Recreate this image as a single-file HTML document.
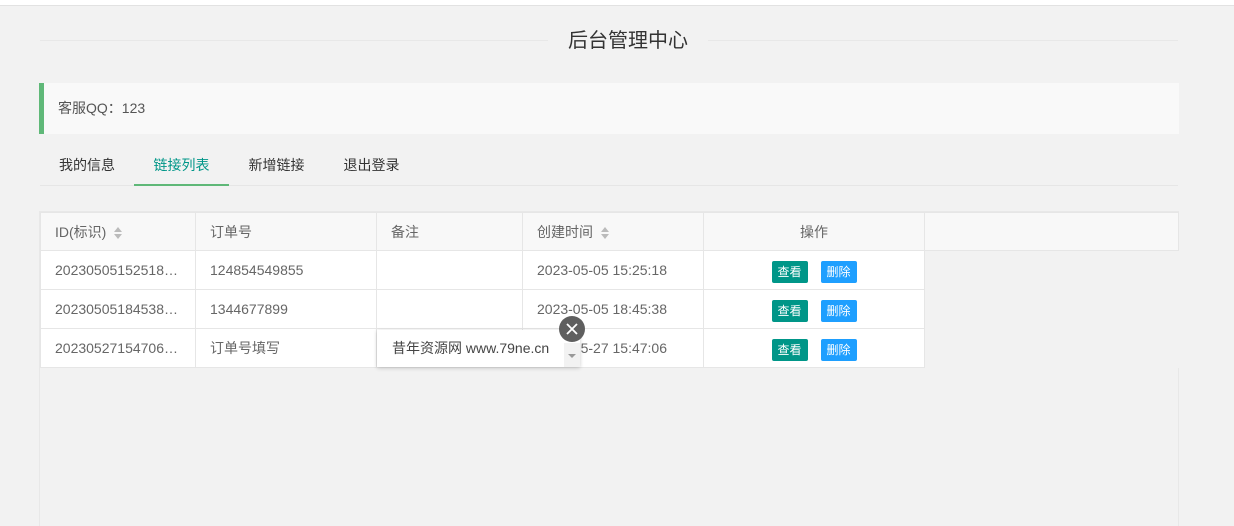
<!DOCTYPE html>
<html><head><meta charset="utf-8"><style>
*{margin:0;padding:0;box-sizing:border-box}
html{width:1234px;height:526px;overflow:hidden}
body{width:1234px;height:526px;background:#f2f2f2;font-family:"Liberation Sans","Noto Sans CJK SC",sans-serif;font-size:14px;color:#666;position:relative;overflow:hidden}
.top{position:absolute;left:0;top:0;width:1234px;height:6px;background:#fff;border-bottom:1px solid #e2e2e2}
.hr{position:absolute;left:40px;top:40px;width:1138px;height:1px;background:#e8e8e8}
.title{position:absolute;left:548px;top:28px;width:160px;text-align:center;background:#f2f2f2;font-size:20px;color:#333;line-height:26px}
.quote{position:absolute;left:39px;top:83px;width:1140px;height:51px;background:#f9f9f9;border-left:5px solid #5fb878;padding-left:14px;line-height:51px;color:#555}
.tabs{position:absolute;left:40px;top:145px;width:1138px;height:41px;border-bottom:1px solid #e6e6e6}
.tab{position:absolute;top:0;height:41px;line-height:40px;color:#333;text-align:center}
.tab.on{color:#009688;border-bottom:2px solid #5fb878}
.wrap{position:absolute;left:39px;top:211px;width:1140px;height:315px;border:1px solid #e8e8e8;border-bottom:none}
table{position:absolute;left:40px;top:212px;border-collapse:collapse}
td,th{height:39px;border:1px solid #e6e6e6;font-weight:normal;text-align:left;padding-left:14px;color:#666;white-space:nowrap;overflow:hidden}
th{background:#f8f8f8;height:38px}
tr.b td{background:#fff}
.s{display:inline-block;vertical-align:middle;margin-left:8px;width:8px;height:12px;position:relative}
.s:before{content:"";position:absolute;left:0;top:0;border:4px solid transparent;border-bottom:5px solid #bbb;border-top:0}
.s:after{content:"";position:absolute;left:0;top:7px;border:4px solid transparent;border-top:5px solid #bbb;border-bottom:0}
.btn{display:inline-block;width:36px;height:22px;line-height:22px;color:#fff;font-size:12px;text-align:center;border-radius:2px;vertical-align:middle;position:relative;top:2px}
.g{background:#009688}.bl{background:#1e9fff;margin-left:13px}
.pop{position:absolute;left:377px;top:330px;width:203px;height:37px;background:#fff;box-shadow:0 1px 4px rgba(0,0,0,.2);line-height:37px;padding-left:15px;color:#444}
.pop .ar{position:absolute;right:0;top:13px;width:16px;height:24px;background:#f2f2f2}
.pop .ar:after{content:"";position:absolute;left:4px;top:11px;border:4px solid transparent;border-top:4px solid #999}
.x{position:absolute;left:559px;top:316px;width:26px;height:26px;border-radius:50%;background:#5f5f5f}
</style></head><body>
<div class="top"></div>
<div class="hr"></div>
<div class="title">后台管理中心</div>
<div class="quote">客服QQ：123</div>
<div class="tabs">
<div class="tab" style="left:0;width:94px">我的信息</div>
<div class="tab on" style="left:94px;width:95px">链接列表</div>
<div class="tab" style="left:189px;width:95px">新增链接</div>
<div class="tab" style="left:284px;width:95px">退出登录</div>
</div>
<div class="wrap"></div>
<table>
<tr><th style="width:155px">ID(标识)<span class="s"></span></th><th style="width:181px">订单号</th><th style="width:146px">备注</th><th style="width:181px">创建时间<span class="s"></span></th><th style="width:221px;text-align:center;padding:0">操作</th><th style="width:254px"></th></tr>
<tr class="b"><td>20230505152518…</td><td>124854549855</td><td></td><td>2023-05-05 15:25:18</td><td style="text-align:center;padding:0"><span class="btn g">查看</span><span class="btn bl">删除</span></td><td style="background:#f2f2f2;border:none;border-left:1px solid #e6e6e6"></td></tr>
<tr class="b"><td>20230505184538…</td><td>1344677899</td><td></td><td>2023-05-05 18:45:38</td><td style="text-align:center;padding:0"><span class="btn g">查看</span><span class="btn bl">删除</span></td><td style="background:#f2f2f2;border:none;border-left:1px solid #e6e6e6"></td></tr>
<tr class="b"><td>20230527154706…</td><td>订单号填写</td><td></td><td>2023-05-27 15:47:06</td><td style="text-align:center;padding:0"><span class="btn g">查看</span><span class="btn bl">删除</span></td><td style="background:#f2f2f2;border:none;border-left:1px solid #e6e6e6"></td></tr>
</table>
<div class="pop">昔年资源网 www.79ne.cn<div class="ar"></div></div>
<div class="x"><svg width="26" height="26"><path d="M8 8L18 18M18 8L8 18" stroke="#fff" stroke-width="1.8"/></svg></div>
</body></html>
